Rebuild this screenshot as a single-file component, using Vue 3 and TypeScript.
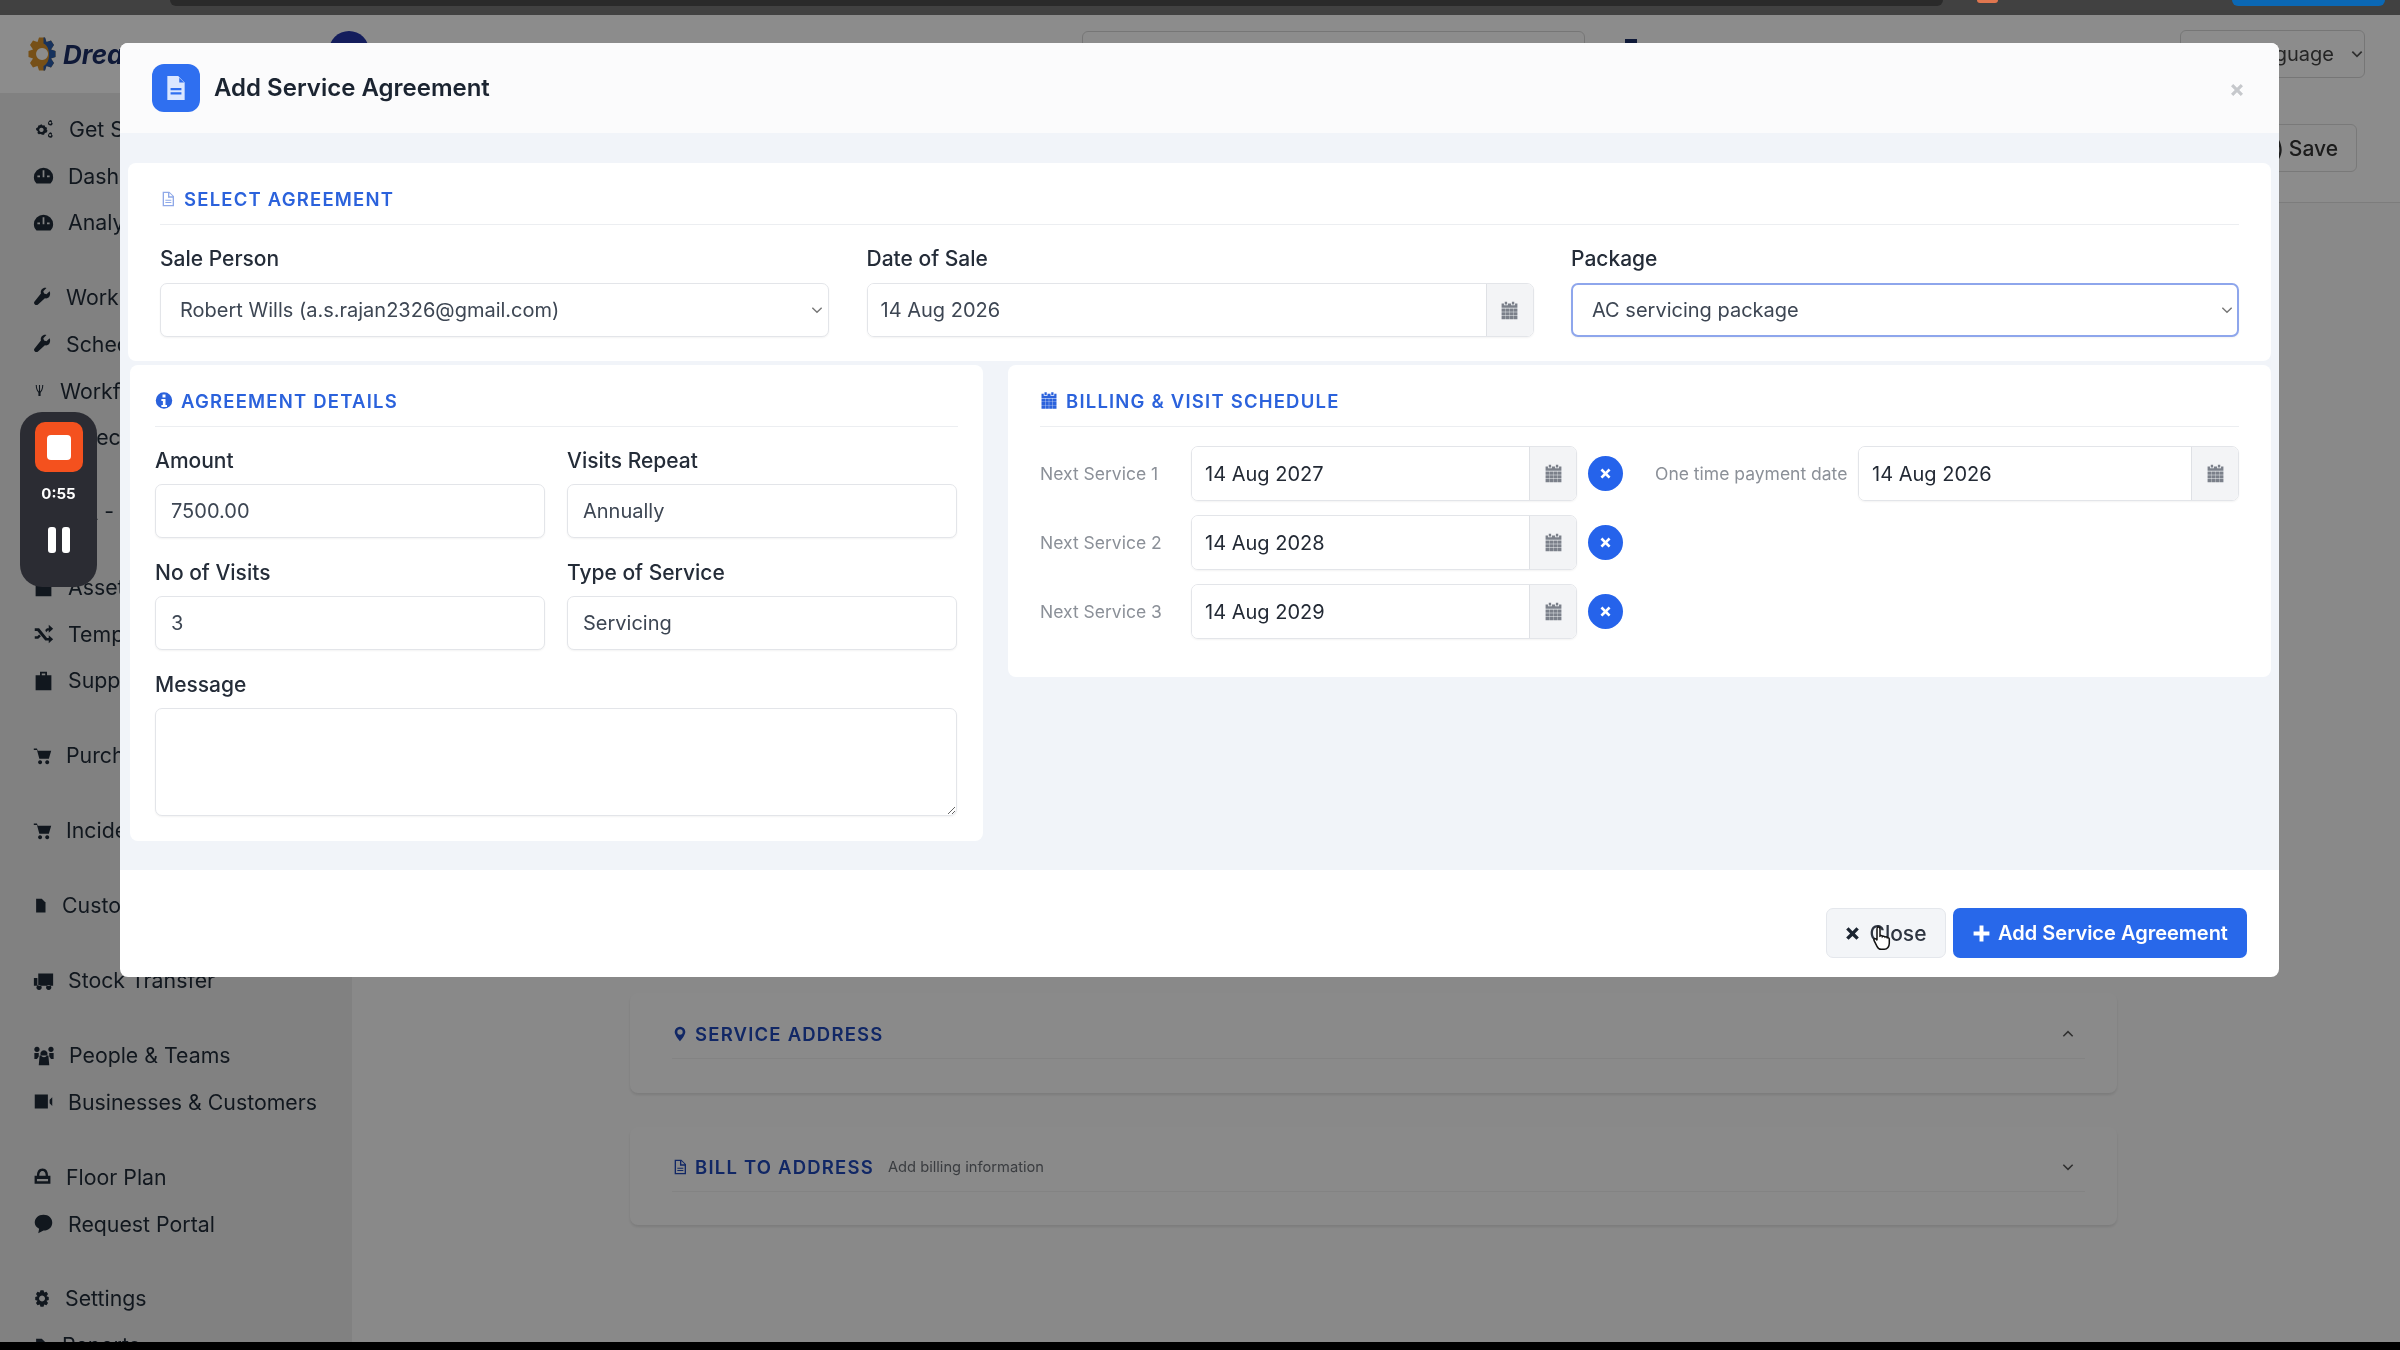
<script setup lang="ts">
// calendar: two tabs, a header band and a 4x3 grid of cells
const calendarCells = (): string => {
  let d = "M6 1h3v3.500H6zM15 1h3v3.500h-3zM2 3h3v2.500h5V3h4v2.500h5V3h3v5.500H2z";
  for (let row = 0; row < 3; row++) {
    for (let col = 0; col < 4; col++) {
      const x = 2 + col * 5.1;
      const y = 9.4 + row * 4.7;
      d += `M${x} ${y}h4.700v4.200h-4.700z`;
    }
  }
  return d;
};

const icons: Record<string, string> = {
  doc: "M4 1h10l6 6v16H4zM7 12v2h10v-2zM7 16v2h10v-2zM15 2.500V7h4.500z",
  file: "M4 1h10l7 7v15H4zM6 3v18h13V10h-7V3zM14 3v5h5zM8 13h9v1.500H8zM8 16.500h9V18H8z",
  info: "M12 1a11 11 0 1 0 0 22 11 11 0 0 0 0-22zM10 4h4v4h-4zM8.500 10H14v8h2v2.500H8.500V18h2v-5.500h-2z",
  calendar: calendarCells(),
  times: "M7 4l5 5 5-5 3 3-5 5 5 5-3 3-5-5-5 5-3-3 5-5-5-5z",
  plus: "M9.500 2h5v7.500H22v5h-7.500V22h-5v-7.500H2v-5h7.500z",
  pin: "M12 1a8 8 0 0 0-8 8c0 5 8 14 8 14s8-9 8-14a8 8 0 0 0-8-8zM12 5a4 4 0 1 1 0 8 4 4 0 0 1 0-8z",
  cogs: "M7 7l2-1 1.500 1.500 2-.500 1 2 2 1-.500 2 1 1.500-1 2-2 .5-1 2h-2L8 17l-2 .5-1.500-1.500.500-2-2-1.500V10.500l2-1 .500-2zM9 10a2.500 2.500 0 1 0 .1 0zM19 1l2 1v2l1 1-1 2-2 .5-2-1-.500-2 1-2zM19 3a1.300 1.300 0 1 0 .1 0zM19 15l2 1v2l1 1-1 2-2 .5-2-1-.500-2 1-2zM19 17a1.300 1.300 0 1 0 .1 0z",
  gauge: "M12 3a11 11 0 0 0-11 11c0 3 1 5 3 7h16c2-2 3-4 3-7A11 11 0 0 0 12 3zM11 6h2v8h-2zM5 12h3v2H5zM16 12h3v2h-3z",
  wrench: "M21 4l-4 4-3-1-1-3 4-4c-4-1-8 2-7 7L2 17c-2 2 1 6 4 4l9-8c5 1 8-4 6-9z",
  fork: "M5 2h2c0 7 2 10 4 12V2h2v12c2-2 4-5 4-12h2c0 8-3 12-5 14v6h-4v-6C8 14 5 10 5 2z",
  box: "M3 4h18v18H3zM9 2h6v3H9z",
  shuffle: "M2 6h5l9 11h2v-3l5 4.500-5 4.500v-3h-4L5 9H2zM2 15h3l2-2 2 2-3 3H2zM14 8l2-2h2V2l5 4.500-5 4.500V8.500h-1l-2 2z",
  case: "M8 2h8v4h5v17H3V6h5zM10 4v2h4V4z",
  cart: "M1 3h4l1 3h17l-3 10H8L5 5H1zM9 18a2.500 2.500 0 1 1-.1 0zM18 18a2.500 2.500 0 1 1-.1 0z",
  page: "M5 1h9l6 6v16H5z",
  truck: "M6 4h17v14H6zM1 9h4v9H1zM7 17a3 3 0 1 1-.1 0zM18 17a3 3 0 1 1-.1 0z",
  people: "M12 6a4 4 0 1 1-.1 0zM4 2a3 3 0 1 1-.1 0zM20 2a3 3 0 1 1-.1 0zM7 12h10l1 11H6zM1 9h5v4l-2 3H1zM18 9h5v7h-3l-2-3z",
  video: "M2 4h15v16H2zM19 10l3-3v10l-3-3z",
  print: "M12 2c5 0 7 4 7 9h3v10H2V11h3c0-5 2-9 7-9zM8 11h8c0-3-1-6-4-6s-4 3-4 6zM5 15v3h14v-3z",
  chat: "M12 2c6 0 10 4 10 9s-4 9-10 9l-6 3 1-5c-3-2-5-4-5-7 0-5 4-9 10-9z",
  gear: "M10 1h4l1 3 3-1 2 3-2 3 3 1v4l-3 1 2 3-2 3-3-1-1 3h-4l-1-3-3 1-2-3 2-3-3-1v-4l3-1-2-3 2-3 3 1zM12 8a4 4 0 1 0 .1 0z",
};

interface NavItem {
  icon: string;
  label: string;
  groupEnd?: boolean;
  width?: number; // glyph widths differ, so labels don't line up
}

const nav: NavItem[] = [
  { icon: "cogs", label: "Get Started", width: 22 },
  { icon: "gauge", label: "Dashboard" },
  { icon: "gauge", label: "Analytics", groupEnd: true },
  { icon: "wrench", label: "Work Orders", width: 19 },
  { icon: "wrench", label: "Schedule", width: 19 },
  { icon: "fork", label: "Workflows", width: 13 },
  { icon: "box", label: "Checklists", groupEnd: true },
  { icon: "box", label: "QA - Forms", groupEnd: true },
  { icon: "box", label: "Assets" },
  { icon: "shuffle", label: "Templates" },
  { icon: "case", label: "Suppliers", groupEnd: true },
  { icon: "cart", label: "Purchases", width: 19, groupEnd: true },
  { icon: "cart", label: "Incidents", width: 19, groupEnd: true },
  { icon: "page", label: "Customers", width: 15, groupEnd: true },
  { icon: "truck", label: "Stock Transfer", groupEnd: true },
  { icon: "people", label: "People & Teams", width: 22 },
  { icon: "video", label: "Businesses & Customers", groupEnd: true },
  { icon: "print", label: "Floor Plan", width: 19 },
  { icon: "chat", label: "Request Portal", groupEnd: true },
  { icon: "gear", label: "Settings", width: 18 },
  { icon: "page", label: "Reports", width: 15 },
];

const services = [
  { label: "Next Service 1", date: "14 Aug 2027" },
  { label: "Next Service 2", date: "14 Aug 2028" },
  { label: "Next Service 3", date: "14 Aug 2029" },
];
</script>

<template>
  <div class="screen">
    <div class="chrome">
      <div class="chrome-pill"></div>
      <div class="chrome-rec"></div>
      <div class="chrome-btn"></div>
    </div>

    <div class="page">
      <header class="app-head">
        <div class="logo">
          <svg class="logo-gear" viewBox="0 0 24 24">
            <path fill="#d9932b" :d="icons.gear" />
            <path fill="#2a5caa" d="M13 1h1l1 3 3-1 2 3-2 3 3 1v4l-3 1 2 3-2 3-3-1-1 3h-1v-3c5-2 5-13 0-15z" />
          </svg>
          <span class="logo-text">Dream</span>
        </div>
        <div class="avatar"></div>
        <div class="head-search"></div>
        <div class="head-dots"></div>
        <div class="head-lang">
          <span>Language</span>
          <svg class="chev" viewBox="0 0 12 12"><path d="M2 4l4 4 4-4" /></svg>
        </div>
      </header>

      <div class="app-body">
        <aside class="sidebar">
          <div v-for="item in nav" :key="item.label" class="nav-row" :class="{ 'group-end': item.groupEnd }">
            <svg class="nav-icon" :style="{ width: (item.width ?? 21) + 'px' }" viewBox="0 0 24 24">
              <path fill-rule="evenodd" :d="icons[item.icon]" />
            </svg>
            <span>{{ item.label }}</span>
          </div>
        </aside>

        <main class="main">
          <div class="page-head">
            <button class="save-btn"><span>)</span><span>Save</span></button>
          </div>
          <div class="page-cards">
            <section class="bg-card svc">
              <div class="bg-title">
                <svg class="bg-icon" viewBox="0 0 24 24"><path fill-rule="evenodd" :d="icons.pin" /></svg>
                <span>SERVICE ADDRESS</span>
                <svg class="bg-chev" viewBox="0 0 12 12"><path d="M2 8l4-4 4 4" /></svg>
              </div>
            </section>
            <section class="bg-card bill">
              <div class="bg-title">
                <svg class="bg-icon" viewBox="0 0 24 24"><path fill-rule="evenodd" :d="icons.file" /></svg>
                <span>BILL TO ADDRESS</span>
                <small>Add billing information</small>
                <svg class="bg-chev" viewBox="0 0 12 12"><path d="M2 4l4 4 4-4" /></svg>
              </div>
            </section>
          </div>
        </main>
      </div>

      <div class="backdrop"></div>

      <div class="modal">
        <div class="modal-head">
          <div class="modal-badge">
            <svg viewBox="0 0 24 24"><path fill="#dbe7ff" fill-rule="evenodd" :d="icons.doc" /></svg>
          </div>
          <h2>Add Service Agreement</h2>
          <svg class="modal-x" viewBox="0 0 24 24"><path :d="icons.times" /></svg>
        </div>

        <div class="modal-body">
          <section class="card select-card">
            <div class="sec-title">
              <svg class="sec-icon light" viewBox="0 0 24 24"><path fill-rule="evenodd" :d="icons.file" /></svg>
              SELECT AGREEMENT
            </div>
            <div class="top-grid">
              <div>
                <label>Sale Person</label>
                <div class="select-wrap">
                  <select class="ctl">
                    <option>Robert Wills (a.s.rajan2326@gmail.com)</option>
                  </select>
                  <svg class="select-chev" viewBox="0 0 12 12"><path d="M2 4l4 4 4-4" /></svg>
                </div>
              </div>
              <div>
                <label>Date of Sale</label>
                <div class="date-ctl">
                  <input class="date-input muted" value="14 Aug 2026" readonly />
                  <span class="addon">
                    <svg viewBox="0 0 24 24"><path :d="icons.calendar" /></svg>
                  </span>
                </div>
              </div>
              <div>
                <label>Package</label>
                <div class="select-wrap">
                  <select class="ctl focus">
                    <option>AC servicing package</option>
                  </select>
                  <svg class="select-chev" viewBox="0 0 12 12"><path d="M2 4l4 4 4-4" /></svg>
                </div>
              </div>
            </div>
          </section>

          <div class="lower">
            <section class="card details">
              <div class="sec-title">
                <svg class="sec-icon" viewBox="0 0 24 24"><path fill-rule="evenodd" :d="icons.info" /></svg>
                AGREEMENT DETAILS
              </div>
              <div class="detail-grid">
                <div>
                  <label>Amount</label>
                  <input class="ctl" value="7500.00" readonly />
                </div>
                <div>
                  <label>Visits Repeat</label>
                  <input class="ctl" value="Annually" readonly />
                </div>
                <div>
                  <label>No of Visits</label>
                  <input class="ctl" value="3" readonly />
                </div>
                <div>
                  <label>Type of Service</label>
                  <input class="ctl" value="Servicing" readonly />
                </div>
                <div class="span2">
                  <label>Message</label>
                  <textarea class="ctl area"></textarea>
                </div>
              </div>
            </section>

            <section class="card schedule">
              <div class="sec-title">
                <svg class="sec-icon" viewBox="0 0 24 24"><path :d="icons.calendar" /></svg>
                BILLING &amp; VISIT SCHEDULE
              </div>
              <div class="sched-grid">
                <div class="sched-list">
                  <div v-for="s in services" :key="s.label" class="sched-row">
                    <span class="sched-label">{{ s.label }}</span>
                    <div class="date-ctl sched-date">
                      <input class="date-input" :value="s.date" readonly />
                      <span class="addon">
                        <svg viewBox="0 0 24 24"><path :d="icons.calendar" /></svg>
                      </span>
                    </div>
                    <span class="remove">
                      <svg viewBox="0 0 24 24"><path :d="icons.times" /></svg>
                    </span>
                  </div>
                </div>
                <div class="pay-row">
                  <span class="sched-label pay-label">One time payment date</span>
                  <div class="date-ctl pay-date">
                    <input class="date-input" value="14 Aug 2026" readonly />
                    <span class="addon">
                      <svg viewBox="0 0 24 24"><path :d="icons.calendar" /></svg>
                    </span>
                  </div>
                </div>
              </div>
            </section>
          </div>
        </div>

        <div class="modal-foot">
          <button class="btn btn-light">
            <svg viewBox="0 0 24 24"><path :d="icons.times" /></svg>
            Close
          </button>
          <button class="btn btn-blue">
            <svg viewBox="0 0 24 24"><path :d="icons.plus" /></svg>
            Add Service Agreement
          </button>
        </div>
      </div>

      <!-- pointer sits over the Close button -->
      <svg class="cursor" viewBox="0 0 20 26">
        <path
          d="M6 2c1.500 0 2 1 2 2v7l1-.500c1 0 1.500.5 1.500 1 .5-.5 2-.5 2.500.5.5-.5 2-.3 2.300.8.800-.3 2 .2 2 1.500v4c0 3-2 6-5 6H9c-2 0-3-1-4-3l-3-6c-.5-1 .8-2.500 2.500-1l.5 1V4c0-1 .500-2 1-2z"
          fill="#fff"
          stroke="#111"
          stroke-width="1.500"
        />
      </svg>

      <div class="rec">
        <div class="rec-stop"><span></span></div>
        <div class="rec-time">0:55</div>
        <div class="rec-pause"><span></span><span></span></div>
      </div>
    </div>

    <div class="black-bar"></div>
  </div>
</template>

<style>
html,
body {
  margin: 0;
  background: #000;
}
</style>

<style scoped>
* {
  box-sizing: border-box;
}

.screen {
  width: 2400px;
  height: 1350px;
  display: flex;
  flex-direction: column;
  overflow: hidden;
  font-family: Inter, "Liberation Sans", sans-serif;
  filter: blur(0.6px);
}

.chrome {
  height: 15px;
  background: #414141;
  display: flex;
  align-items: flex-start;
  flex: none;
}
.chrome-pill {
  margin-left: 170px;
  width: 1773px;
  height: 6px;
  border-radius: 0 0 10px 10px;
  background: #2a2a2a;
}
.chrome-rec {
  margin-left: 34px;
  width: 21px;
  height: 3px;
  border-radius: 0 0 3px 3px;
  background: #e0764f;
}
.chrome-btn {
  margin-left: 234px;
  width: 153px;
  height: 6px;
  border-radius: 0 0 8px 8px;
  background: #0b68b5;
}

.page {
  flex: 1;
  min-height: 0;
  position: relative;
  display: flex;
  flex-direction: column;
  background: #fafafa;
  overflow: hidden;
}

.app-head {
  height: 78px;
  flex: none;
  display: flex;
  align-items: center;
  padding-left: 24px;
  background: #fff;
  position: relative;
}
.logo {
  display: flex;
  align-items: center;
  gap: 3px;
  width: 305px;
}
.logo-gear {
  width: 36px;
  height: 36px;
}
.logo-text {
  font-size: 26px;
  font-weight: 700;
  font-style: italic;
  color: #1c2f66;
}
.avatar {
  width: 40px;
  height: 40px;
  border-radius: 50%;
  background: #2536a8;
  margin-top: -6px;
}
.head-search {
  margin-left: 713px;
  width: 503px;
  height: 46px;
  border: 1px solid #d8d8d8;
  border-radius: 6px;
}
.head-dots {
  margin-left: 40px;
  width: 12px;
  height: 30px;
  background: #1c2f66;
}
.head-lang {
  margin-left: auto;
  margin-right: 35px;
  width: 185px;
  height: 48px;
  border: 1px solid #d8d8d8;
  border-radius: 6px;
  display: flex;
  align-items: center;
  justify-content: flex-end;
  gap: 16px;
  padding-right: 0;
  font-size: 20px;
  color: #444;
}
.chev {
  width: 14px;
  height: 14px;
  fill: none;
  stroke: #555;
  stroke-width: 1.500;
}

.app-body {
  flex: 1;
  min-height: 0;
  display: flex;
}

.sidebar {
  width: 352px;
  flex: none;
  padding: 13px 0 0 33px;
  background: #ebebeb;
  overflow: hidden;
  font-size: 21.300px;
  color: #1f2a37;
}
.nav-row {
  height: 46.600px;
  display: flex;
  align-items: center;
  gap: 14px;
  white-space: nowrap;
}
.nav-row.group-end {
  margin-bottom: 28.400px;
}
.nav-icon {
  height: 21px;
  flex: none;
  fill: #1f2a37;
}

.main {
  flex: 1;
  min-width: 0;
}
.page-head {
  height: 110px;
  border-bottom: 1px solid #e2e2e2;
  background: #fff;
  display: flex;
  justify-content: flex-end;
  align-items: flex-start;
  padding: 31px 43px 0 0;
}
.save-btn {
  width: 160px;
  height: 48px;
  border: 1px solid #dcdcdc;
  border-radius: 6px;
  background: #fff;
  font: 500 21px Inter, sans-serif;
  color: #333;
  display: flex;
  align-items: center;
  justify-content: flex-end;
  gap: 5px;
  padding-right: 18px;
}
.page-cards {
  padding: 790px 0 0 278px;
  width: 1765px;
  display: flex;
  flex-direction: column;
  gap: 34px;
}
.bg-card {
  padding: 0 32px 0 42px;
  border-radius: 8px;
  background: #fbfbfb;
  box-shadow: 0 2px 3px rgba(0, 0, 0, 0.1);
}
.svc {
  height: 100px;
  padding-top: 25px;
}
.bill {
  height: 98px;
  padding-top: 24px;
}
.bg-title {
  display: flex;
  align-items: center;
  gap: 7px;
  height: 32px;
  font-size: 18.500px;
  font-weight: 600;
  letter-spacing: 1.200px;
  color: #1f48b8;
  border-bottom: 1px solid #efefef;
  padding-bottom: 8px;
  box-sizing: content-box;
}
.bg-title small {
  margin-left: 7px;
  font-size: 14.700px;
  font-weight: 400;
  letter-spacing: 0;
  color: #6b6f76;
}
.bg-icon {
  width: 16px;
  height: 20px;
  fill: #1f48b8;
}
.bg-chev {
  margin-left: auto;
  margin-right: 10px;
  width: 14px;
  height: 14px;
  fill: none;
  stroke: #555;
  stroke-width: 1.300;
}

.backdrop {
  position: absolute;
  inset: 0;
  background: rgba(0, 0, 0, 0.45);
}

.modal {
  position: absolute;
  left: 120px;
  top: 28px;
  width: 2159px;
  height: 934px;
  display: flex;
  flex-direction: column;
  background: #fff;
  border-radius: 8px;
  overflow: hidden;
}

.modal-head {
  height: 90px;
  flex: none;
  display: flex;
  align-items: center;
  padding: 0 33px 0 32px;
  background: #fbfbfc;
}
.modal-badge {
  width: 48px;
  height: 48px;
  border-radius: 12px;
  background: #2f6ff0;
  display: flex;
  align-items: center;
  justify-content: center;
}
.modal-badge svg {
  width: 26px;
  height: 28px;
}
.modal-head h2 {
  margin: 0 0 2px 14px;
  font-size: 24px;
  font-weight: 600;
  color: #1b2431;
}
.modal-x {
  margin-left: auto;
  width: 18px;
  height: 18px;
  fill: #c6c8cc;
  margin-top: 4px;
}

.modal-body {
  flex: 1;
  padding: 30px 8px 28px 8px;
  background: #f1f4f9;
  display: flex;
  flex-direction: column;
  gap: 4px;
}

.card {
  background: #fff;
  border-radius: 8px;
}
.select-card {
  height: 198px;
  padding: 22px 32px 0 32px;
}
.sec-title {
  display: flex;
  align-items: center;
  gap: 8px;
  height: 23px;
  padding-top: 2px;
  padding-bottom: 14px;
  box-sizing: content-box;
  font-size: 18.500px;
  font-weight: 600;
  letter-spacing: 1.200px;
  color: #2b62dc;
  border-bottom: 1px solid #eceef1;
}
.sec-icon {
  width: 18px;
  height: 21px;
  fill: #2b62dc;
}
.sec-icon.light {
  width: 16px;
  height: 22px;
  fill: #8fa9e8;
}
.top-grid {
  display: grid;
  grid-template-columns: 669px 667px 668px;
  column-gap: 37.500px;
  margin-top: 20px;
}
.top-grid label {
  margin-bottom: 11px;
}
label {
  display: block;
  height: 27px;
  line-height: 27px;
  margin-bottom: 10px;
  font-size: 21px;
  font-weight: 500;
  color: #242c38;
}
.ctl {
  display: block;
  width: 100%;
  height: 54px;
  padding: 0 15px;
  border: 1px solid #e3e5e9;
  border-radius: 7px;
  background: #fff;
  font: 400 20px Inter, sans-serif;
  color: #3d4653;
  outline: none;
  box-shadow: 0 1px 2px rgba(0, 0, 0, 0.05);
}
.ctl.focus {
  border: 2px solid #8ea6ec;
}
select.ctl {
  appearance: none;
  padding-left: 19px;
}
.select-wrap {
  position: relative;
}
.select-chev {
  position: absolute;
  right: 5px;
  top: 20px;
  width: 14px;
  height: 14px;
  fill: none;
  stroke: #777;
  stroke-width: 1.200;
}

.date-ctl {
  display: flex;
  height: 54px;
  border: 1px solid #e3e5e9;
  border-radius: 7px;
  overflow: hidden;
  box-shadow: 0 1px 2px rgba(0, 0, 0, 0.05);
}
.date-input {
  flex: 1;
  min-width: 0;
  border: 0;
  padding: 0 13px;
  font: 400 20px Inter, sans-serif;
  color: #232a35;
  outline: none;
  background: #fff;
}
.date-input.muted {
  color: #3d4653;
}
.addon {
  flex: none;
  width: 47px;
  display: flex;
  align-items: center;
  justify-content: center;
  background: #f3f4f6;
  border-left: 1px solid #dfe1e5;
}
.addon svg {
  width: 19px;
  height: 23px;
  fill: #7b808a;
}

.lower {
  display: grid;
  grid-template-columns: 855px 1263px;
  column-gap: 25px;
  align-items: start;
}
.lower .card:first-child {
  margin-left: 2px;
}

.details {
  height: 476px;
  padding: 22px 25px 0 25px;
}
.schedule {
  height: 312px;
  padding: 22px 32px 0 32px;
}
.detail-grid {
  display: grid;
  grid-template-columns: 390px 390px;
  column-gap: 22px;
  row-gap: 21px;
  margin-top: 20px;
}
.span2 {
  grid-column: span 2;
}
.area {
  height: 108px;
  resize: vertical;
  padding: 10px 15px;
}

.sched-grid {
  display: flex;
  margin-top: 19px;
}
.sched-list {
  width: 615px;
  flex: none;
  display: flex;
  flex-direction: column;
  gap: 14px;
}
.sched-row {
  display: flex;
  align-items: center;
  height: 55px;
}
.sched-label {
  width: 151px;
  flex: none;
  font-size: 17.500px;
  color: #8b9098;
}
.sched-date {
  width: 386px;
  height: 55px;
}
.remove {
  margin-left: 11px;
  width: 35px;
  height: 35px;
  border-radius: 50%;
  background: #2563eb;
  display: flex;
  align-items: center;
  justify-content: center;
}
.remove svg {
  width: 15px;
  height: 15px;
  fill: #fff;
}
.pay-row {
  display: flex;
  align-items: center;
  height: 55px;
  flex: 1;
  min-width: 0;
}
.pay-label {
  width: 203px;
  white-space: nowrap;
}
.pay-date {
  flex: 1;
  min-width: 0;
  height: 55px;
}

.modal-foot {
  height: 107px;
  flex: none;
  display: flex;
  justify-content: flex-end;
  align-items: flex-start;
  gap: 7px;
  padding: 38px 32px 0 0;
}
.btn {
  height: 50px;
  border-radius: 7px;
  display: flex;
  align-items: center;
  justify-content: center;
  gap: 7px;
  font: 500 21px Inter, sans-serif;
}
.btn svg {
  width: 19px;
  height: 19px;
}
.btn-light {
  width: 120px;
  border: 1px solid #e4e7ec;
  background: #f3f5f8;
  color: #2d3440;
  padding-left: 4px;
}
.btn-light svg {
  fill: #1b2431;
}
.btn-blue {
  width: 294px;
  border: 0;
  background: #2868ea;
  color: #fff;
  font-weight: 600;
  font-size: 20px;
}
.btn-blue svg {
  fill: #fff;
}

.cursor {
  position: absolute;
  left: 1872px;
  top: 910px;
  width: 20px;
  height: 26px;
}

.rec {
  position: absolute;
  left: 20px;
  top: 397px;
  width: 77px;
  height: 175px;
  border-radius: 22px;
  background: #2b2c33;
  display: flex;
  flex-direction: column;
  align-items: center;
  padding-top: 10px;
}
.rec-stop {
  width: 48px;
  height: 50px;
  border-radius: 10px;
  background: #f4511e;
  display: flex;
  align-items: center;
  justify-content: center;
}
.rec-stop span {
  width: 24px;
  height: 25px;
  border-radius: 4px;
  background: #fff;
}
.rec-time {
  margin-top: 12px;
  font-size: 15px;
  font-weight: 700;
  color: #fff;
  line-height: 20px;
}
.rec-pause {
  margin-top: 23px;
  display: flex;
  gap: 6px;
}
.rec-pause span {
  width: 8px;
  height: 26px;
  border-radius: 3px;
  background: #fff;
}

.black-bar {
  height: 8px;
  flex: none;
  background: #000;
}
</style>
